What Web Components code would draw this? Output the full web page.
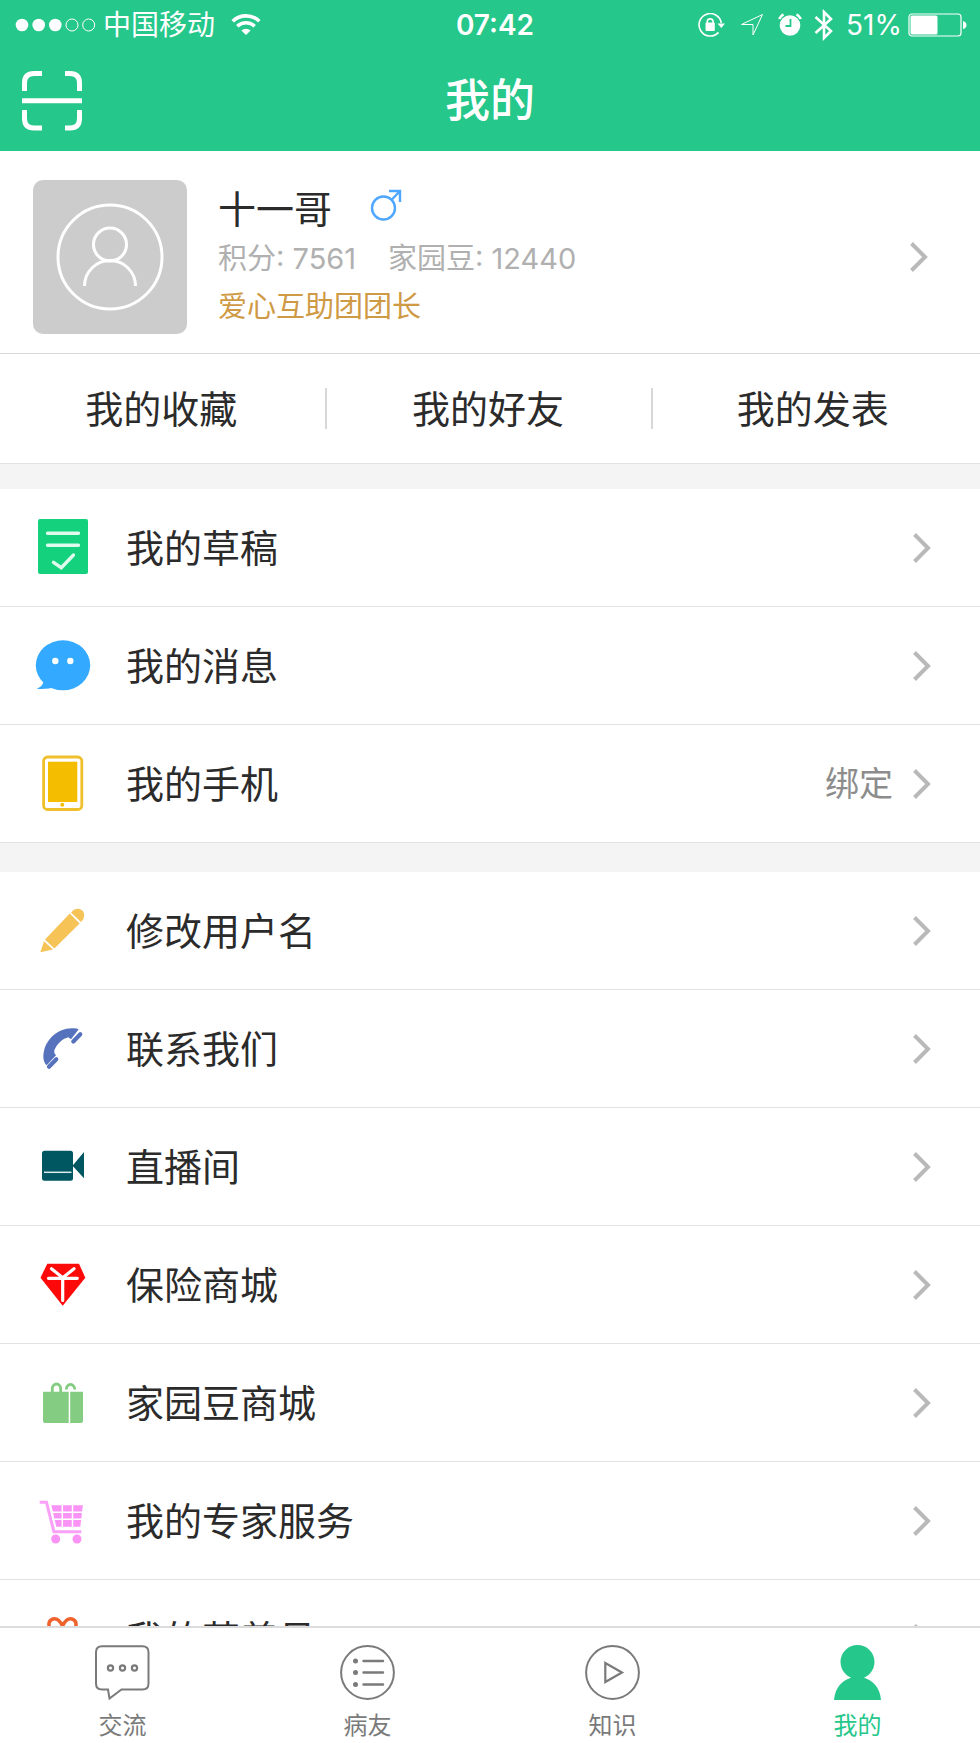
<!DOCTYPE html>
<html lang="zh-CN">
<head>
<meta charset="utf-8">
<meta name="viewport" content="width=device-width, initial-scale=1">
<title>我的</title>
<style>
  body {
    margin: 0;
    font-family: Inter, "Noto Sans CJK SC", sans-serif;
    color: #2b2b2b;
    background: #f4f4f4;
    --brand: #25c78a;
    --line: #e2e2e2;
  }
</style>
</head>
<body>
<app-shell>
  <status-bar slot="top" carrier="中国移动" time="07:42" battery="51%"></status-bar>
  <title-bar slot="top">我的</title-bar>

  <profile-card name="十一哥" points="7561" beans="12440" role-name="爱心互助团团长"></profile-card>
  <quick-links>
    <quick-link>我的收藏</quick-link>
    <quick-link>我的好友</quick-link>
    <quick-link>我的发表</quick-link>
  </quick-links>

  <menu-group class="first">
    <menu-row icon="draft">我的草稿</menu-row>
    <menu-row icon="message">我的消息</menu-row>
    <menu-row icon="phone">我的手机<span slot="note">绑定</span></menu-row>
  </menu-group>
  <menu-group>
    <menu-row icon="pencil">修改用户名</menu-row>
    <menu-row icon="call">联系我们</menu-row>
    <menu-row icon="video">直播间</menu-row>
    <menu-row icon="diamond">保险商城</menu-row>
    <menu-row icon="bag">家园豆商城</menu-row>
    <menu-row icon="cart">我的专家服务</menu-row>
    <menu-row icon="gift">我的营养员</menu-row>
  </menu-group>

  <tab-bar slot="bottom">
    <tab-item icon="chat">交流</tab-item>
    <tab-item icon="list">病友</tab-item>
    <tab-item icon="play">知识</tab-item>
    <tab-item icon="user" active>我的</tab-item>
  </tab-bar>
</app-shell>

<script>
  const define = (name, render) => customElements.define(name, class extends HTMLElement {
    constructor() {
      super();
      this.attachShadow({ mode: 'open' });
    }
    connectedCallback() {
      this.shadowRoot.innerHTML = render(this);
    }
  });

  const chevron = `<svg class="chevron" width="18" height="32" viewBox="0 0 18 32" fill="none" stroke="#b9b9b9" stroke-width="4" aria-hidden="true"><path d="M1.5 2.5 15 16 1.5 29.5"/></svg>`;

  const menuIcons = {
    draft: `<rect x="3" width="50" height="55" rx="2" fill="#13d17d"/>
      <path d="M12.5 14.3H43.5M12.5 26.3H43.5M18.5 43.4 26.3 48.7 38.5 36" fill="none" stroke="#dffbee" stroke-width="3.4" stroke-linecap="round"/>`,
    message: `<g fill="#33a9ff"><ellipse cx="28" cy="28.3" rx="27.2" ry="25"/><path d="M1.7 51.7Q7 49.5 8.3 45.7L9 42 21 50Q12 52.5 1.7 51.7Z"/></g>
      <circle cx="20.3" cy="24" r="3.2" fill="#fff"/><circle cx="35.3" cy="24" r="3.2" fill="#fff"/>`,
    phone: `<rect x="8.6" y="2" width="38.2" height="52.5" rx="4" fill="none" stroke="#efc02c" stroke-width="2.8"/>
      <rect x="13" y="6.7" width="29.3" height="40.3" fill="#f5bd00"/><circle cx="27.3" cy="49.8" r="2" fill="#f5bd00"/>`,
    pencil: `<g fill="#f6c356"><path d="M5.3 50.2 9 39.3 18 47.5Z"/><path d="M10 37.5 34.8 11.6 44.6 21.5 19.4 46.5Z"/><path d="M36 10.4C41 4.5 46.5 6.5 48.5 10 50 13.5 49 17 46 20.1Z"/></g>`,
    call: `<path d="M11.7 45.3C8 42 7.5 36 9.5 29 12 20 22 8.5 36.7 8.3Q41.5 8 43.7 9.3L36 19.3 33.3 17.3C28 18.5 22 23.5 19.3 30.5Q18.5 32.5 21 35.3Z" fill="#5772bd"/>
      <path d="M14 46.7 21.3 39.3M38.3 21.5 45.3 14.3" stroke="#5772bd" stroke-width="4.2" stroke-linecap="round"/>`,
    video: `<g fill="#005661"><rect x="7" y="12.7" width="31" height="30" rx="2.5"/><path d="M37.5 27.7 49 14V40.3Z"/></g><path d="M9 34.3H36.5" stroke="#dcebec" stroke-width="1.5"/>`,
    diamond: `<path d="M12.3 7.7H44L50.3 21.7 27.7 49.7 5.5 21.7Z" fill="#fd0909"/>
      <path d="M16.5 12.8 27.7 21.7 39 12.8M13.5 22.3H42.3M27.7 22.3V44.5" fill="none" stroke="#fff" stroke-width="3.2" stroke-linecap="round"/>`,
    bag: `<path d="M8 17.7H33.7V49H10Q8 49 8 47ZM35.2 17.7H48V47Q48 49 46 49H35.2Z" fill="#84cc82"/>
      <path d="M17.3 18.5V15A4.2 5 0 0 1 25.7 15V18.5M31.3 15.5A4.2 5 0 0 1 39.7 15.5" fill="none" stroke="#84cc82" stroke-width="2.8"/>`,
    cart: `<path d="M4.7 10.3H11.5L18.9 39.7H46.3" fill="none" stroke="#f9a0f7" stroke-width="3"/>
      <path d="M16.3 13.3H47.9L45.3 34.7H21.3Z" fill="#f993f5"/>
      <path d="M27.3 13V35M37.5 13V35M16 20.2H48M17 27.3H48" stroke="#fff" stroke-width="1.5"/>
      <circle cx="20.7" cy="47" r="4.5" fill="#f993f5"/><circle cx="42" cy="47" r="4.5" fill="#f993f5"/>`,
    gift: `<path d="M27.5 16C24 9 20 8.5 18 9 13 10.5 13 16 16 19L27.5 24 39 19C42 16 42 10.5 37 9 35 8.5 31 9 27.5 16Z" fill="none" stroke="#f0622d" stroke-width="3.5"/>
      <path d="M8 24H47V50H8Z" fill="#f0622d"/>`
  };

  const tabIcons = {
    chat: `<path d="M7 1.2H47.5Q53.5 1.2 53.5 7.2V38.5Q53.5 44.5 47.5 44.5H26.5L14.5 53.5 13 44.5H7Q1 44.5 1 38.5V7.2Q1 1.2 7 1.2Z" stroke-width="2"/>
      <g stroke-width="2.2"><circle cx="15.5" cy="23" r="2.6"/><circle cx="27.5" cy="23" r="2.6"/><circle cx="39.5" cy="23" r="2.6"/></g>`,
    list: `<circle cx="27.5" cy="27.5" r="26.4" stroke-width="2"/><path d="M23.5 16H43M23.5 27.5H43M23.5 39.5H43" stroke-width="2.4" stroke-linecap="round"/>
      <g fill="currentColor" stroke="none"><circle cx="15.5" cy="16" r="2.5"/><circle cx="15.5" cy="27.5" r="2.5"/><circle cx="15.5" cy="39.5" r="2.5"/></g>`,
    play: `<circle cx="27.5" cy="27.5" r="26.4" stroke-width="2"/><path d="M20.3 18 37 27.5 20.3 37Z" stroke-width="2.2"/>`,
    user: `<g fill="currentColor" stroke="none"><circle cx="27.5" cy="17" r="17"/><path d="M4 55C5 42 13 35 21.5 32.5H33.5C42 35 50 42 51 55Z"/></g>`
  };

  define('app-shell', () => `
    <style>
      :host { display: flex; flex-direction: column; height: 100vh; }
      header { background: var(--brand); color: #fff; }
      main { flex: 1; min-height: 0; overflow-y: auto; scrollbar-width: none; }
    </style>
    <header><slot name="top"></slot></header>
    <main><slot></slot></main>
    <slot name="bottom"></slot>`);

  define('status-bar', el => `
    <style>
      :host { display: grid; grid-template-columns: 1fr auto 1fr; align-items: center; height: 50px; padding: 0 13px 0 15px; font-size: 28px; line-height: 48px; }
      div { display: flex; align-items: center; }
      .end { justify-content: flex-end; }
      svg { display: block; }
      .carrier { margin: 0 16px 0 7px; }
      .time { margin-left: 8px; font-weight: 600; }
      .lock, .arrow { margin-right: 14px; }
      .alarm, .blue { margin-right: 12px; }
      .level { margin-right: 6px; }
    </style>
    <div>
      <svg width="81" height="14" viewBox="0 0 81 14" fill="#fff" aria-hidden="true"><circle cx="7" cy="7" r="6.3"/><circle cx="23.7" cy="7" r="6.3"/><circle cx="40.3" cy="7" r="6.3"/><g fill="none" stroke="#fff"><circle cx="57" cy="7" r="6"/><circle cx="73.7" cy="7" r="6"/></g></svg>
      <span class="carrier">${el.getAttribute('carrier')}</span>
      <svg width="30" height="22" viewBox="0 0 30 22" fill="none" stroke="#fff" stroke-width="3.6" aria-hidden="true"><path d="M1.7 7.3A19 19 0 0 1 28.3 7.3M6.3 12.3A12.5 12.5 0 0 1 23.7 12.3"/><path d="M10.3 16.5A7 7 0 0 1 19.7 16.5L15 21Z" fill="#fff" stroke="none"/></svg>
    </div>
    <span class="time">${el.getAttribute('time')}</span>
    <div class="end">
      <svg class="lock" width="28" height="24" viewBox="0 0 28 24" aria-hidden="true"><path d="M23.3 10A11.2 11.2 0 1 0 20.5 19.4" fill="none" stroke="#fff" stroke-width="1.6"/><path d="M19.5 10.5H27L23.3 15Z" fill="#fff"/><rect x="7.5" y="9.5" width="9.3" height="8.5" rx="1" fill="#fff"/><path d="M9.2 10.5V8.3A3 3 0 0 1 15.1 8.3V10.5" fill="none" stroke="#fff" stroke-width="1.6"/></svg>
      <svg class="arrow" width="24" height="24" viewBox="0 0 24 24" fill="none" stroke="#fff" stroke-width="1" aria-hidden="true"><path d="M22.5 1.5 13 22V11.5H1.5Z"/></svg>
      <svg class="alarm" width="24" height="24" viewBox="0 0 24 24" aria-hidden="true"><circle cx="12" cy="12.5" r="10.3" fill="#fff"/><path d="M12.5 6V13H7.5" fill="none" stroke="#25c78a" stroke-width="1.8"/><path d="M1.2 6A9 9 0 0 1 5.5 1.3M18.5 1.3A9 9 0 0 1 22.8 6" stroke="#fff" stroke-width="2.6" fill="none"/></svg>
      <svg class="blue" width="20" height="32" viewBox="0 0 20 32" fill="none" stroke="#fff" stroke-width="2.6" aria-hidden="true"><path d="M1.5 8 17 22 10 29V3L17 10 1.5 24"/></svg>
      <span class="level">${el.getAttribute('battery')}</span>
      <svg width="59" height="24" viewBox="0 0 59 24" aria-hidden="true"><rect x="1" y="1" width="52" height="22" rx="3" fill="none" stroke="#fff" stroke-width="1.2"/><rect x="2.5" y="2.5" width="27" height="19" rx="1.5" fill="#fff"/><path d="M55 8Q58.5 9 58.5 12T55 16Z" fill="#fff"/></svg>
    </div>`);

  define('title-bar', () => `
    <style>
      :host { display: grid; grid-template-columns: 1fr auto 1fr; align-items: center; height: 101px; padding: 0 22px; }
      button { justify-self: start; padding: 0; border: 0; background: none; color: inherit; }
      svg { display: block; }
      h1 { margin: 0; font-size: 45px; line-height: 64px; font-weight: 500; }
    </style>
    <button type="button" aria-label="扫一扫">
      <svg width="60" height="60" viewBox="0 0 60 60" fill="none" stroke="currentColor" stroke-width="5"><path d="M2.5 20V12Q2.5 2.5 12 2.5H20M43 2.5H48Q57.5 2.5 57.5 12V20M57.5 39V47.5Q57.5 57 48 57H43M20 57H12Q2.5 57 2.5 47.5V39M0 29.7H60"/></svg>
    </button>
    <h1><slot></slot></h1>`);

  define('profile-card', el => `
    <style>
      :host { display: block; background: #fff; border-bottom: 1px solid #d9d9d9; }
      a { display: flex; align-items: center; padding: 29px 52px 19px 33px; color: inherit; text-decoration: none; }
      svg { display: block; flex: none; }
      .info { flex: 1; margin-left: 31px; }
      h2 { display: flex; align-items: center; gap: 38px; margin: 0; font-size: 38px; line-height: 54px; font-weight: 400; }
      h2 svg { margin-bottom: 8px; }
      p { margin: 0 0 2px; font-size: 29px; line-height: 46px; }
      .stats { display: flex; gap: 32px; color: #b0b0b0; }
      .role { color: #cf9a45; }
    </style>
    <a href="#profile">
      <svg width="154" height="154" viewBox="0 0 154 154" aria-hidden="true"><rect width="154" height="154" rx="10" fill="#ccc"/><g fill="none" stroke="#fff" stroke-width="3"><circle cx="77" cy="77" r="52"/><circle cx="77" cy="64.5" r="16.5"/><path d="M51.5 106A25.5 25.5 0 0 1 102.5 106"/></g></svg>
      <div class="info">
        <h2>${el.getAttribute('name')}<svg width="32" height="32" viewBox="0 0 32 32" fill="none" stroke="#4da6ff" stroke-width="2.4" role="img" aria-label="男"><circle cx="13.5" cy="19" r="11.5"/><path d="M21.7 10.8 30 2M19 2H30V13"/></svg></h2>
        <p class="stats"><span>积分: ${el.getAttribute('points')}</span><span>家园豆: ${el.getAttribute('beans')}</span></p>
        <p class="role">${el.getAttribute('role-name')}</p>
      </div>
      ${chevron}
    </a>`);

  define('quick-links', () => `
    <style>
      :host { display: grid; grid-template-columns: repeat(3, 1fr); background: #fff; border-bottom: 1px solid var(--line); }
    </style>
    <slot></slot>`);

  define('quick-link', () => `
    <style>
      :host { display: flex; align-items: center; height: 109px; }
      a { flex: 1; padding-right: 2px; text-align: center; font-size: 38px; line-height: 54px; color: inherit; text-decoration: none; }
      i { width: 2px; height: 41px; background: #d8d8d8; }
      :host(:last-child) a { padding-right: 8px; }
      :host(:last-child) i { display: none; }
    </style>
    <a href="#list"><slot></slot></a><i></i>`);

  define('menu-group', () => `
    <style>
      :host { display: block; margin-top: 29px; background: #fff; }
      :host(.first) { margin-top: 25px; }
    </style>
    <slot></slot>`);

  define('menu-row', el => `
    <style>
      :host { display: block; border-bottom: 1px solid var(--line); }
      a { display: flex; align-items: center; height: 117px; padding: 0 49px 0 35px; font-size: 38px; line-height: 54px; color: inherit; text-decoration: none; }
      svg { display: block; flex: none; }
      .label { flex: 1; margin-left: 34px; }
      .note { margin-right: 20px; font-size: 34px; color: #8c8c8c; }
    </style>
    <a href="#${el.getAttribute('icon')}">
      <svg width="57" height="57" viewBox="0 0 57 57" aria-hidden="true">${menuIcons[el.getAttribute('icon')]}</svg>
      <span class="label"><slot></slot></span>
      <span class="note"><slot name="note"></slot></span>
      ${chevron}
    </a>`);

  define('tab-bar', () => `
    <style>
      :host { display: block; background: #fff; border-top: 2px solid #dcdcdc; }
      nav { display: grid; grid-template-columns: repeat(4, 1fr); }
    </style>
    <nav><slot></slot></nav>`);

  define('tab-item', el => `
    <style>
      :host { display: block; color: #7a7a7a; }
      :host([active]) { color: var(--brand); }
      a { display: flex; flex-direction: column; align-items: center; gap: 10px; padding: 17px 0 1px; font-size: 24px; line-height: 32px; color: inherit; text-decoration: none; }
      svg { display: block; }
    </style>
    <a href="#${el.getAttribute('icon')}"${el.hasAttribute('active') ? ' aria-current="page"' : ''}>
      <svg width="55" height="55" viewBox="0 0 55 55" fill="none" stroke="currentColor" aria-hidden="true">${tabIcons[el.getAttribute('icon')]}</svg>
      <slot></slot>
    </a>`);
</script>
</body>
</html>
